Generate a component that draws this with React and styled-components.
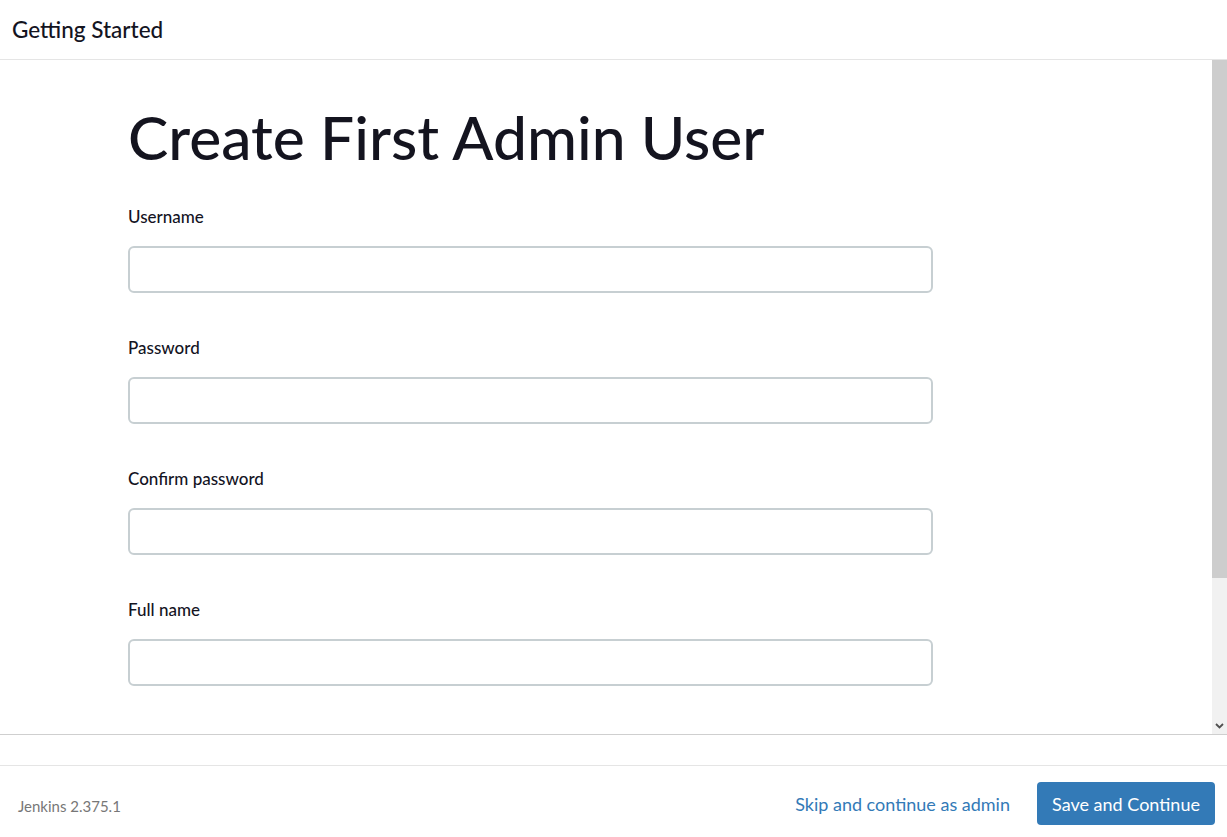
import React from 'react';
import styled, { createGlobalStyle } from 'styled-components';

const Global = createGlobalStyle`
  html, body {
    margin: 0;
    padding: 0;
    height: 100%;
    background: #ffffff;
    font-family: Lato, "Noto Sans", sans-serif;
    color: #14141f;
  }
  #root { height: 100%; }
`;

const Modal = styled.div`
  display: flex;
  flex-direction: column;
  height: 837px;
  background: #fff;
`;

const Header = styled.header`
  height: 59px;
  flex: none;
  display: flex;
  align-items: center;
  padding: 0 12px;
  border-bottom: 1px solid #e5e5e5;
  h4 {
    margin: 0;
    font-size: 22.5px;
    font-weight: 500;
    color: #14141f;
  }
`;

const ScrollArea = styled.div`
  display: flex;
  height: 674px;
  flex: none;
  border-bottom: 1px solid #cfcfcf;
`;

const Scroller = styled.div`
  flex: 1;
  overflow-y: auto;
  scrollbar-width: none;
  &::-webkit-scrollbar { display: none; }
`;

const ScrollBar = styled.div`
  width: 15px;
  flex: none;
  display: flex;
  flex-direction: column;
  background: #f1f1f1;
`;

const Thumb = styled.div`
  height: ${(p) => p.$size}px;
  background: #cdcdcd;
`;

const ArrowSlot = styled.div`
  margin-top: auto;
  height: 17px;
  display: flex;
  align-items: center;
  justify-content: center;
`;

const Content = styled.div`
  padding: 41px 0 120px 128px;
`;

const Title = styled.h1`
  margin: 0 0 34px;
  font-size: 60.5px;
  font-weight: 500;
  line-height: 72px;
  color: #14141f;
`;

const Field = styled.div`
  width: 805px;
  margin-bottom: 45px;
`;

const Label = styled.label`
  display: block;
  font-size: 17px;
  line-height: 20px;
  font-weight: 500;
  color: #14141f;
  margin-bottom: 19px;
`;

const Input = styled.input`
  display: block;
  box-sizing: border-box;
  width: 100%;
  height: 47px;
  margin: 0;
  border: 2px solid #c7cfd2;
  border-radius: 6px;
  background: #fff;
  font: inherit;
  padding: 0 12px;
  outline: none;
`;

const Spacer = styled.div`
  height: 30px;
  flex: none;
  border-bottom: 1px solid #e5e5e5;
`;

const Footer = styled.footer`
  flex: 1;
  display: flex;
  align-items: center;
  padding: 4px 12px 0 18px;
`;

const Version = styled.span`
  font-size: 15px;
  color: #777;
  margin-top: 4px;
  flex: 1;
`;

const LinkButton = styled.a`
  font-size: 18px;
  color: #337ab7;
  text-decoration: none;
  margin-right: 27px;
`;

const PrimaryButton = styled.button`
  height: 43px;
  width: 178px;
  border: none;
  border-radius: 4px;
  background: #337ab7;
  color: #fff;
  font-family: inherit;
  font-size: 18px;
`;

const fields = ['Username', 'Password', 'Confirm password', 'Full name', 'E-mail address'];

export default function App() {
  return (
    <>
      <Global />
      <Modal>
        <Header><h4>Getting Started</h4></Header>
        <ScrollArea>
          <Scroller>
            <Content>
              <Title>Create First Admin User</Title>
              {fields.map((f) => (
                <Field key={f}>
                  <Label>{f}</Label>
                  <Input type={f.includes('assword') ? 'password' : 'text'} />
                </Field>
              ))}
            </Content>
          </Scroller>
          <ScrollBar>
            <Thumb $size={518} />
            <ArrowSlot>
              <svg width="9" height="6" viewBox="0 0 9 6">
                <path d="M1 1l3.5 3.5L8 1" fill="none" stroke="#505050" strokeWidth="1.8" />
              </svg>
            </ArrowSlot>
          </ScrollBar>
        </ScrollArea>
        <Spacer />
        <Footer>
          <Version>Jenkins 2.375.1</Version>
          <LinkButton href="#">Skip and continue as admin</LinkButton>
          <PrimaryButton>Save and Continue</PrimaryButton>
        </Footer>
      </Modal>
    </>
  );
}
